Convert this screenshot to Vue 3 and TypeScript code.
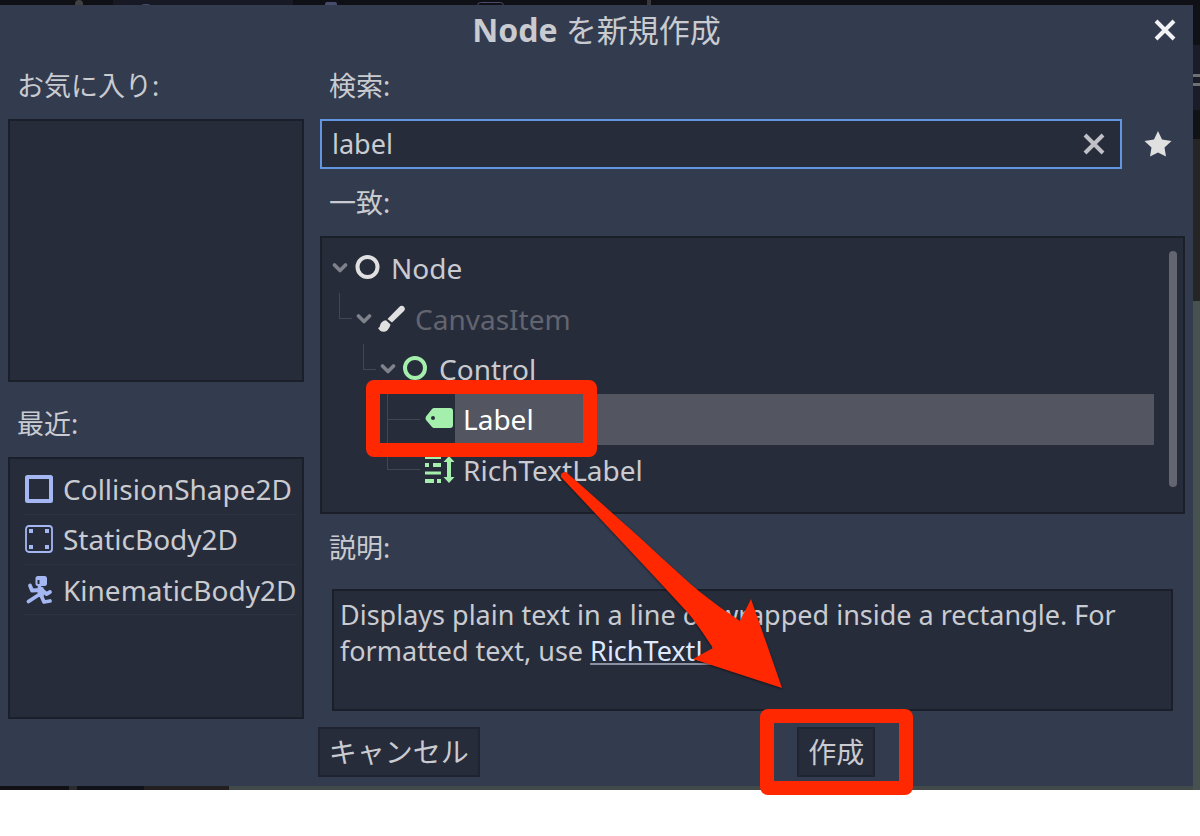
<script setup lang="ts">
import { ref } from 'vue'

type IconName = 'node' | 'brush' | 'control' | 'tag' | 'rich' | 'shape' | 'static' | 'kinematic'

interface TreeNode {
  name: string
  icon: IconName
  depth: number
  leaf?: boolean
  last?: boolean
  muted?: boolean
}

const query = ref('label')
const selected = ref('Label')

const recent: { name: string; icon: IconName }[] = [
  { name: 'CollisionShape2D', icon: 'shape' },
  { name: 'StaticBody2D', icon: 'static' },
  { name: 'KinematicBody2D', icon: 'kinematic' },
]

const tree: TreeNode[] = [
  { name: 'Node', icon: 'node', depth: 0 },
  { name: 'CanvasItem', icon: 'brush', depth: 1, last: true, muted: true },
  { name: 'Control', icon: 'control', depth: 2, last: true },
  { name: 'Label', icon: 'tag', depth: 3, leaf: true },
  { name: 'RichTextLabel', icon: 'rich', depth: 3, leaf: true, last: true },
]
</script>

<template>
  <div class="page">
    <div class="editor">
      <svg class="strip-top" height="5" aria-hidden="true">
        <rect x="113" width="180" height="5" fill="#171a24" />
        <circle cx="79" cy="4" r="4" fill="#414143" />
        <path d="M141 5q5-2 10 0z" fill="#4a5072" />
        <rect x="325" y="2" width="12" height="6" rx="2" fill="#474c6c" />
        <rect x="477.500" y="2.500" width="26" height="8" rx="3" fill="none" stroke="#474c6c" />
        <rect x="647" width="4" height="5" fill="#3a3a3c" />
      </svg>

      <section class="dialog" role="dialog" aria-labelledby="dialog-title">
        <header class="titlebar">
          <h1 id="dialog-title"><b>Node</b> を新規作成</h1>
          <button class="close" type="button" aria-label="閉じる">
            <svg width="24" height="24" viewBox="0 0 24 24"><path d="M3 3L21 21M21 3L3 21" /></svg>
          </button>
        </header>

        <div class="columns">
          <aside class="side">
            <h2 class="caption first">お気に入り:</h2>
            <div class="panel favorites"></div>
            <h2 class="caption spaced">最近:</h2>
            <div class="panel recent">
              <ul>
                <li v-for="item in recent" :key="item.name">
                  <svg class="icon" width="28" height="28" viewBox="0 0 28 28" aria-hidden="true">
                    <rect v-if="item.icon === 'shape'" x="2" y="2" width="24" height="24" rx="0.500" fill="none" stroke="#a5b7f3" stroke-width="4" stroke-linejoin="round" />
                    <g v-else-if="item.icon === 'static'" fill="#a5b7f3">
                      <rect x="1" y="1" width="26" height="26" rx="3" fill="none" stroke="#a5b7f3" stroke-width="1.800" />
                      <path d="M4 4h4v4H4zM20 4h4v4h-4zM4 20h4v4H4zM20 20h4v4h-4z" />
                    </g>
                    <g v-else fill="none" stroke="#a5b7f3" stroke-width="3.800" stroke-linecap="round" stroke-linejoin="round">
                      <path d="M13 0h6.500q2.500 0 2.500 2.500v5q0 2.500-2.500 2.500h-6.500q-2.500 0-2.500-2.500V2.500q0-2.500 2.500-2.500zM12.500 4v4h2V4z" fill="#a5b7f3" fill-rule="evenodd" stroke="none" />
                      <path d="M5 9.500L7 14.500L15 14M14.500 11V19M17 13V20M13.500 19L3.500 25.500M16 19L19 26L25 25M17 14L21.500 18L25 16" />
                    </g>
                  </svg>
                  <span>{{ item.name }}</span>
                </li>
              </ul>
            </div>
          </aside>

          <main class="main">
            <label class="caption first" for="search">検索:</label>
            <div class="search-row">
              <div class="search">
                <input id="search" v-model="query" type="text" spellcheck="false" />
                <button type="button" aria-label="クリア" @click="query = ''">
                  <svg width="24" height="24" viewBox="0 0 24 24"><path d="M3 3L21 21M21 3L3 21" /></svg>
                </button>
              </div>
              <button class="star" type="button" aria-label="お気に入りに追加">
                <svg width="28" height="28" viewBox="0 0 28 28">
                  <path d="M14 1L18 9.500L27.500 11L20.500 17.500L22 26.500L14 22.500L6 26.500L7.500 17.500L0.500 11L10 9.500Z" />
                </svg>
              </button>
            </div>

            <h2 class="caption">一致:</h2>
            <div class="panel matches">
              <div class="tree" role="tree" aria-label="一致">
                <div
                  v-for="node in tree"
                  :key="node.name"
                  class="row"
                  role="treeitem"
                  :aria-selected="selected === node.name"
                  :class="{ muted: node.muted, selected: selected === node.name }"
                  @click="selected = node.name"
                >
                  <span v-for="n in Math.max(node.depth - 1, 0)" :key="n" class="indent"></span>
                  <span v-if="node.depth" class="guide" :class="{ leaf: node.leaf, last: node.last }"><i></i><i></i></span>
                  <svg v-if="!node.leaf" class="chevron" width="16" height="12" viewBox="0 0 16 12" aria-hidden="true">
                    <path d="M2.500 3L8 8.500L13.500 3" />
                  </svg>
                  <svg class="icon" width="28" height="28" viewBox="0 0 28 28" aria-hidden="true">
                    <circle v-if="node.icon === 'node'" cx="14.500" cy="13" r="10" fill="none" stroke="#e0e0e0" stroke-width="4" />
                    <g v-else-if="node.icon === 'brush'" fill="#e0e0e0">
                      <path d="M10.500 14L22 2.200Q24 0.200 26.500 1.200Q29 3.500 27 6L15 17.500Z" />
                      <path d="M9 15.300L13.500 19.500Q13 22.500 10.500 25.200Q7 28 3.500 26Q2 24.500 1 23Q3 22.500 3 20.500Q4 16 9 15.300Z" />
                    </g>
                    <circle v-else-if="node.icon === 'control'" cx="14" cy="13" r="10" fill="none" stroke="#a5efac" stroke-width="4" />
                    <path v-else-if="node.icon === 'tag'" fill="#a5efac" fill-rule="evenodd" d="M9 3H25Q28 3 28 6V20Q28 23 25 23H9Q8 23 7 22L1 15Q0 13.500 1 11.500L7 4Q8 3 9 3ZM8 11A2 2 0 1 0 8 15A2 2 0 1 0 8 11Z" />
                    <g v-else fill="#a5efac">
                      <path d="M0 0h16v3H0zM0 7h4v4H0zM8 7h8v4H8zM0 15.500h16v3H0zM0 23h9v4H0zM12 23h4v4h-4z" />
                      <path d="M24 0L29.500 6H26V21H29.500L24 27L18.500 21H22V6H18.500Z" />
                    </g>
                  </svg>
                  <span class="name">{{ node.name }}</span>
                </div>
              </div>
              <div class="scrollbar"></div>
            </div>

            <h2 class="caption">説明:</h2>
            <div class="panel description">
              Displays plain text in a line or wrapped inside a rectangle. For formatted text, use
              <a href="#">RichTextLabel</a>.
            </div>
          </main>
        </div>

        <footer class="actions">
          <button type="button">キャンセル</button>
          <button type="button">作成</button>
        </footer>
      </section>
    </div>

    <svg class="annotations" width="1200" height="836" viewBox="0 0 1200 836" aria-hidden="true">
      <rect x="373" y="387" width="217" height="63" rx="1" />
      <rect x="767" y="716" width="139" height="72" rx="1" />
      <path d="M561 477Q560 472 566 472Q590 493 620 520C650 546 675 571 700 592Q720 608 740 621L751 599L782 688L693 659L713 648C703 633 698 625 688 613Q655 577 623 543Z" />
    </svg>
  </div>
</template>

<style>
body {
  margin: 0;
  background: #fff;
}
</style>

<style scoped>
.page {
  position: relative;
  min-height: 100vh;
  background: #fff;
}

.editor {
  position: relative;
  box-sizing: border-box;
  padding: 5px 7px 4px 0;
  font-family: 'Noto Sans', 'Noto Sans CJK JP', sans-serif;
  font-size: 27px;
  line-height: 36px;
  color: #c9cbd0;
  background:
    linear-gradient(90deg, #101014 69px, #2b2b2e 69px 77px, #10121a 77px 144px, #221f1e 144px 229px, #424b4a 229px) bottom left / calc(100% - 7px) 4px no-repeat,
    linear-gradient(#101116 45px, #1a1d27 45px 74px, #6f7074 74px 77px, #1a1d27 77px 83px, #6f7074 83px 86px, #1a1d27 86px 110px, #111216 110px 139px, #252525 139px 301px, #47514f 301px) top right / 7px 100% no-repeat,
    #0e1015;
}

.strip-top {
  position: absolute;
  top: 0;
  left: 0;
  width: 100%;
}

.dialog {
  position: relative;
  display: flex;
  flex-direction: column;
  padding-bottom: 9px;
  background: #333b4f;
}

button {
  box-sizing: border-box;
  padding: 0;
  border: 0;
  background: none;
  color: inherit;
  font: inherit;
}

button svg {
  display: block;
}

.titlebar {
  display: grid;
  grid-template-columns: 56px 1fr 56px;
  align-items: center;
  height: 49px;
}

.titlebar h1 {
  grid-column: 2;
  margin: 0;
  font-size: 31px;
  font-weight: 400;
  text-align: center;
}

.titlebar b {
  font-size: 32px;
}

.close {
  justify-self: center;
}

.close path {
  stroke: #f2f2f4;
  stroke-width: 4;
}

.columns {
  display: grid;
  grid-template-columns: 296px 1fr;
  gap: 16px;
  padding: 0 8px;
}

.side,
.main {
  display: flex;
  flex-direction: column;
  min-width: 0;
}

.caption {
  margin: 0;
  padding-left: 9px;
  font-size: 27px;
  font-weight: 400;
  line-height: 67px;
}

.caption.first {
  padding-bottom: 2px;
  line-height: 63px;
}

.caption.spaced {
  margin-top: 8px;
}

.panel {
  box-sizing: border-box;
  border: 2px solid #1b1f2a;
  background: #272c3b;
}

.favorites,
.recent {
  flex: 1;
}

.recent ul {
  display: flex;
  flex-direction: column;
  height: 151px;
  margin: 6px 5px 0 14px;
  padding: 0;
  list-style: none;
}

.recent li {
  display: flex;
  flex: 1;
  gap: 10px;
  align-items: center;
  box-sizing: border-box;
  border-bottom: 1px solid #2e3342;
  font-size: 28px;
  white-space: nowrap;
}

.icon {
  flex: none;
  overflow: visible;
}

.recent .icon {
  margin-left: 1px;
}

.search-row {
  display: flex;
  gap: 8px;
}

.search {
  display: flex;
  flex: 1;
  align-items: center;
  box-sizing: border-box;
  height: 50px;
  padding-right: 14px;
  border: 2px solid #6395e0;
  background: #272c3b;
}

.search input {
  flex: 1;
  min-width: 0;
  padding: 0 10px;
  border: 0;
  outline: 0;
  background: none;
  color: inherit;
  font: inherit;
}

.search path {
  stroke: #bfc1c7;
  stroke-width: 4;
}

.star {
  display: grid;
  place-items: center;
  width: 55px;
}

.star path {
  fill: #e0e0e0;
}

.matches {
  display: flex;
  gap: 15px;
  padding: 5px 6px 17px 10px;
}

.tree {
  display: flex;
  flex: 1;
  flex-direction: column;
  height: 252px;
  font-size: 28px;
}

.row {
  display: flex;
  flex: 1;
  align-items: center;
}

.row .icon {
  margin: 0 2px 0 5px;
}

.name {
  display: flex;
  flex: 1;
  align-items: center;
  align-self: stretch;
  padding-left: 8px;
}

.muted .name {
  color: #62656f;
}

.selected .name {
  background: #535661;
  color: #fff;
}

.indent {
  width: 24px;
}

.guide {
  display: flex;
  flex-direction: column;
  align-self: stretch;
  box-sizing: border-box;
  width: 24px;
  padding: 0 4px 0 7px;
}

.guide.leaf {
  width: 40px;
  padding-right: 0;
}

.guide i {
  flex: 1;
  border-left: 1px solid #414653;
}

.guide i:first-child {
  border-bottom: 1px solid #414653;
}

.guide.last i:last-child {
  border-left-color: transparent;
}

.chevron path {
  fill: none;
  stroke: #7f828b;
  stroke-width: 3.600;
  stroke-linecap: round;
  stroke-linejoin: round;
}

.scrollbar {
  width: 8px;
  height: 236px;
  margin-top: 8px;
  border-radius: 4px;
  background: #636671;
}

.description {
  min-height: 122px;
  margin: 8px 12px;
  padding: 6px;
}

.description a {
  color: #dfe8ff;
  text-decoration-color: #8b91a3;
  text-decoration-thickness: 2px;
  text-underline-offset: 2px;
}

.actions {
  display: flex;
  justify-content: space-evenly;
  padding-top: 8px;
}

.actions button {
  height: 50px;
  padding: 0 9px;
  border: 2px solid #202431;
  background: #272c3b;
  font-size: 28px;
}

.annotations {
  position: absolute;
  top: 0;
  left: 0;
  pointer-events: none;
}

.annotations rect {
  fill: none;
  stroke: #ff2800;
  stroke-width: 14;
  stroke-linejoin: round;
}

.annotations path {
  fill: #ff2800;
  filter: drop-shadow(0 1px 1px #0008);
}
</style>
